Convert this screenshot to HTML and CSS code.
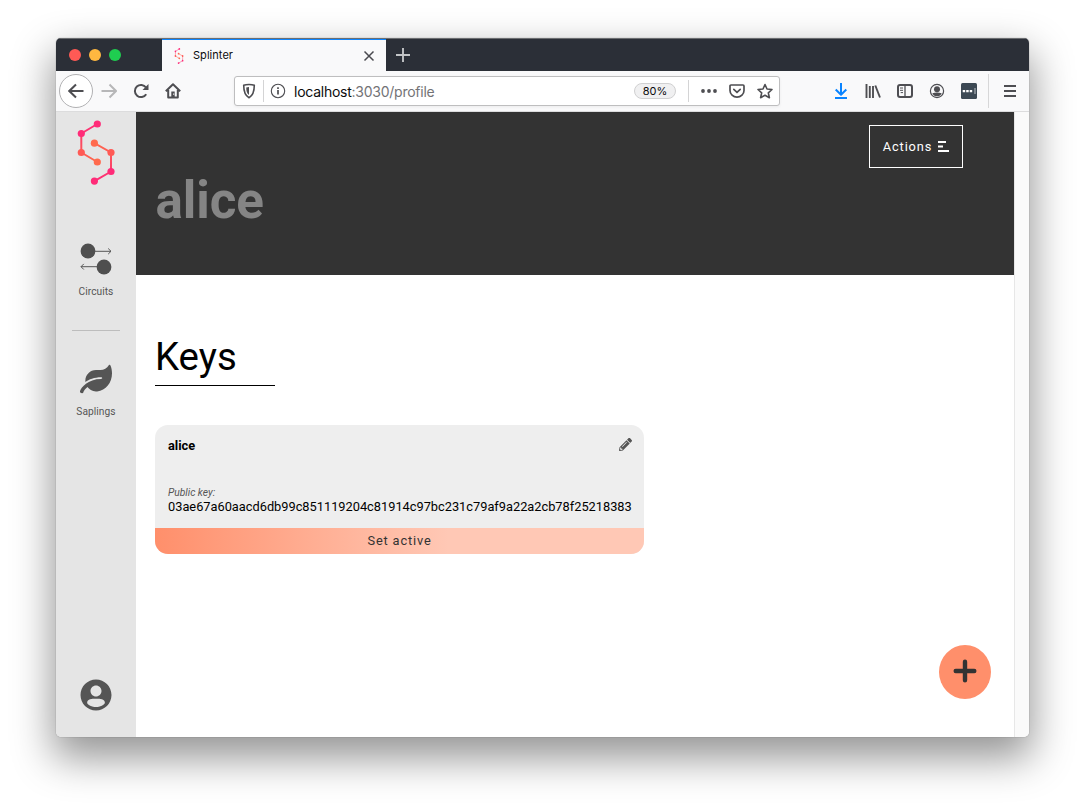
FILE: index.html
```html
<!DOCTYPE html>
<html lang="en">
<head>
<meta charset="utf-8">
<title>Splinter</title>
<link rel="stylesheet" href="styles.css">
</head>
<body>
<svg class="defs" width="0" height="0" aria-hidden="true">
  <defs>
    <linearGradient id="upper" gradientUnits="userSpaceOnUse" x1="0" y1="4" x2="0" y2="42"><stop offset="0" stop-color="#ff2b78"/><stop offset=".3" stop-color="#fb3d6c"/><stop offset="1" stop-color="#ff6a4d"/></linearGradient>
    <linearGradient id="lower" gradientUnits="userSpaceOnUse" x1="0" y1="23" x2="0" y2="61"><stop offset="0" stop-color="#ff6a4d"/><stop offset=".7" stop-color="#fb3d6c"/><stop offset="1" stop-color="#ff2b78"/></linearGradient>
    <symbol id="logo" viewBox="0 0 38 65">
      <g stroke-width="2" fill="none"><path stroke="url(#upper)" d="M20.3 4 4.3 13.5v19l16 9.5"/><path stroke="url(#lower)" d="M17.4 23.2 34 32.5v19l-16.6 9.6"/></g>
      <g fill="#ff2b78"><circle cx="20.3" cy="4" r="3.6"/><circle cx="4.3" cy="13.5" r="3.6"/><circle cx="34" cy="51.5" r="3.6"/><circle cx="17.4" cy="61.1" r="3.6"/></g>
      <g fill="#ff5a55"><circle cx="4.3" cy="32.5" r="3.6"/><circle cx="34" cy="32.5" r="3.6"/></g>
      <g fill="#ff6a4d"><circle cx="20.3" cy="42" r="3.6"/><circle cx="17.4" cy="23.2" r="3.6"/></g>
    </symbol>
  </defs>
</svg>
<div class="window">
  <div class="tabbar">
    <div class="lights"><i class="red"></i><i class="yellow"></i><i class="green"></i></div>
    <div class="tab">
      <svg class="favicon" viewBox="0 0 38 65"><use href="#logo"/></svg>
      <span class="tab-title">Splinter</span>
      <svg class="close" viewBox="0 0 12 12"><path d="M1.5 1.5l9 9M10.5 1.5l-9 9" stroke="#4a4a4f" stroke-width="1.5" fill="none"/></svg>
    </div>
    <svg class="newtab" viewBox="0 0 14 14"><path d="M7 0v14M0 7h14" stroke="#c3c5c7" stroke-width="1.9"/></svg>
  </div>
  <div class="toolbar">
    <div class="back"><svg class="ico" viewBox="0 0 16 16"><path d="M15.5 8H1.5M8 1.5 1.3 8 8 14.500"/></svg></div>
    <svg class="ico forward" viewBox="0 0 16 16"><path d="M.5 8h14M8.500 1.500 15 8l-6.500 6.500"/></svg>
    <svg class="ico reload" viewBox="0 0 16 16"><path d="M13.200 11.200A6.100 6.100 0 1 1 13 4.500"/><path class="solid" d="M15.500 1v6h-6z"/></svg>
    <svg class="ico home" viewBox="0 0 16 16"><path d="M.8 8.300 8 1.300l7.200 7M3.200 7v7.600h9.600V7" stroke-linejoin="round"/><path class="solid" d="M6.300 8.500h3.400V14H6.300z"/><path d="M8.700 10.500v1.300" stroke="#fff" stroke-width="1"/></svg>
    <div class="urlbar">
      <svg class="ico shield" viewBox="0 0 16 16"><path d="M8 1.500c2 0 4 .3 5.300.8 0 6-.8 10-5.300 12.400C3.500 12.300 2.700 8.300 2.700 2.300 4 1.800 6 1.500 8 1.500z" stroke-width="1.600"/><path class="solid" d="M8 4v8C5.800 10.300 5.300 8 5.200 4.400z"/></svg>
      <i class="bar"></i>
      <svg class="ico info" viewBox="0 0 16 16"><circle cx="8" cy="8" r="6.700" stroke-width="1.100"/><path d="M8 7v4.500M8 4.200v1.700" stroke-width="1.700"/></svg>
      <span class="url"><b>localhost</b>:3030/profile</span>
      <span class="zoom">80%</span>
      <i class="bar bar-right"></i>
      <svg class="ico dots" viewBox="0 0 16 16"><g class="solid"><circle cx="2" cy="8" r="1.900"/><circle cx="8" cy="8" r="1.900"/><circle cx="14" cy="8" r="1.900"/></g></svg>
      <svg class="ico pocket" viewBox="0 0 16 16"><path d="M2 2h12q1 0 1 1v4.500a7 6.700 0 0 1-14 0V3q0-1 1-1z" stroke-width="1.700"/><path d="M4.800 6.300 8 9.300l3.200-3" stroke-width="1.700" stroke-linecap="round"/></svg>
      <svg class="ico star" viewBox="0 0 16 16"><path d="m8 1.500 2 4.500 5 .5-3.700 3.300 1.100 4.900L8 12.200l-4.400 2.500 1.100-4.900L1 6.500 6 6z" stroke-width="1.600" stroke-linejoin="round"/></svg>
    </div>
    <div class="tools">
      <svg class="ico download" viewBox="0 0 16 16"><path d="M8 0v11.500M2.700 6.500 8 11.800l5.300-5.300M2 15h12" stroke-linejoin="round"/></svg>
      <svg class="ico" viewBox="0 0 16 16"><path d="M1.500 1v14M4.800 3v12M8 3v12" stroke-width="1.900"/><path d="m10.300 2.500 4.700 12" stroke-width="1.900"/></svg>
      <svg class="ico" viewBox="0 0 16 16"><rect x="1" y="2" width="14" height="12" rx="2"/><path d="M8 2v12" stroke-width="1.300"/><path d="M3 5h3M3 7.300h3M3.700 9.600H6" stroke-width="1"/></svg>
      <svg class="ico" viewBox="0 0 16 16"><circle cx="8" cy="8" r="6.600" stroke-width="1.200"/><g class="solid"><circle cx="8" cy="6.200" r="3"/><path d="M3.300 10.200q4.700-1.500 9.400 0Q11.500 13.300 8 13.300t-4.700-3.100z"/></g></svg>
      <svg class="ico" viewBox="0 0 16 16"><rect width="16" height="16" rx="1.500" fill="#3d4954" stroke="none"/><g fill="#fff" stroke="none"><path d="M1.700 7h2.500v2.300H1.700zM5.200 7h2.500v2.300H5.200zM8.700 7h2.500v2.300H8.700z"/></g><path d="M14 5v6" stroke="#aab0b6" stroke-width="1.200"/></svg>
    </div>
    <i class="divider"></i>
    <svg class="ico menu" viewBox="0 0 16 16"><path d="M2 3h12M2 8h12M2 13h12" stroke-width="1.800"/></svg>
  </div>
  <div class="viewport">
    <nav class="sidebar">
      <svg class="logo" viewBox="0 0 38 65"><use href="#logo"/></svg>
      <a class="nav-item circuits">
        <svg viewBox="0 0 32 32"><g fill="#4f4f4f"><circle cx="8" cy="8" r="7.400"/><circle cx="24" cy="24" r="7.400"/></g><path d="M15 8.300h16M28.200 5.500 31 8.300l-2.800 2.800M17 23.700H1M3.800 20.900 1 23.700l2.800 2.800" stroke="#555" fill="none"/></svg>
        <span>Circuits</span>
      </a>
      <hr class="rule">
      <a class="nav-item">
        <svg viewBox="0 0 576 512"><path fill="#555" d="M546.200 9.700c-5.600-12.500-21.600-13-28.300-1.200C486.900 62.400 431.400 96 368 96h-80C182 96 96 182 96 288c0 7 .8 13.700 1.500 20.500C161.300 262.800 253.400 224 384 224c8.800 0 16 7.200 16 16s-7.200 16-16 16C132.600 256 26 410.100 2.400 468c-6.600 16.300 1.200 34.900 17.500 41.600 16.400 6.800 35-1.100 41.800-17.300 1.500-3.600 20.900-47.900 71.900-90.600 32.400 43.900 94 85.800 174.900 77.200C465.500 467.500 576 326.700 576 154.300c0-50.200-10.800-102.200-29.800-144.600z"/></svg>
        <span>Saplings</span>
      </a>
      <svg class="user" viewBox="0 0 496 512"><path fill="#555" d="M248 8C111 8 0 119 0 256s111 248 248 248 248-111 248-248S385 8 248 8zm0 96c48.600 0 88 39.400 88 88s-39.400 88-88 88-88-39.400-88-88 39.400-88 88-88zm0 344c-58.700 0-142-30-142-72 0-38 38-55 70-58 25-2 42-3 72-3s47 1 72 3c32 3 70 20 70 58 0 42-83.300 72-142 72z"/></svg>
    </nav>
    <main class="main">
      <header class="hero">
        <h1>alice</h1>
        <button class="actions">Actions<svg viewBox="0 0 11 11"><path d="M0 1h8M0 5.500h5M0 10h11" stroke="#fff" stroke-width="2"/></svg></button>
      </header>
      <section class="content">
        <h2>Keys</h2>
        <article class="card">
          <div class="card-body">
            <div class="card-head"><strong>alice</strong><svg viewBox="0 0 512 512"><path fill="#555" d="M498 142l-46 46c-5 5-12 5-17 0L324 77c-5-5-5-12 0-17l46-46c19-19 49-19 68 0l60 60c19 19 19 49 0 68zM285 96L22 360 0 483c-3 17 12 31 28 28l123-21 264-263c5-5 5-12 0-17L302 96c-5-5-12-5-17 0zM124 340c-5-6-5-14 0-20l154-154c6-5 14-5 20 0s5 14 0 20L144 340c-6 5-14 5-20 0zm-36 84h48v36l-64 11-31-31 11-64h36v48z"/></svg></div>
            <em>Public key:</em>
            <p>03ae67a60aacd6db99c851119204c81914c97bc231c79af9a22a2cb78f25218383</p>
          </div>
          <button class="activate">Set active</button>
        </article>
        <button class="add" aria-label="Add key"><svg viewBox="0 0 24 24"><path d="M12 2.700v18.600M2.700 12h18.600" stroke="#333" stroke-width="4.400" stroke-linecap="round"/></svg></button>
      </section>
    </main>
    <div class="scrollbar"></div>
  </div>
</div>
</body>
</html>
```
FILE: styles.css
```css
* { box-sizing: border-box; }
body {
  margin: 0;
  padding: 38px 56px 0;
  height: 811px;
  overflow: hidden;
  background: #fff;
  font-family: Roboto, "Liberation Sans", sans-serif;
}
.defs { position: absolute; }
svg { display: block; flex: none; }
button { font: inherit; border: 0; padding: 0; }
.window {
  width: 973px;
  height: 699px;
  border-radius: 5px;
  overflow: hidden;
  display: flex;
  flex-direction: column;
  background: #fff;
  box-shadow: 0 0 1px rgba(0, 0, 0, .55), 0 18px 40px 3px rgba(0, 0, 0, .42);
}

/* Browser chrome */
.tabbar { display: flex; align-items: center; height: 33px; background: #2b2f37; border-top: 1px solid #6b6d70; }
.lights { width: 106px; padding-left: 13px; display: flex; gap: 8px; }
.lights i { width: 12px; height: 12px; border-radius: 50%; }
.red { background: #ff5a55; }
.yellow { background: #ffb840; }
.green { background: #1fcd50; }
.tab { width: 224px; height: 32px; background: #f9f9fa; border-top: 1px solid #0a84ff; display: flex; align-items: center; padding: 0 11px 0 10px; }
.favicon { width: 14px; height: 16px; }
.tab-title { flex: 1; margin: -1px 0 0 7px; font: 11px Inter, sans-serif; letter-spacing: .05px; color: #0c0c0d; }
.close { width: 12px; height: 12px; }
.newtab { width: 14px; height: 14px; margin: -1px 0 0 10px; }
.toolbar { display: flex; align-items: center; height: 41px; background: #f9f9fa; border-bottom: 1px solid #dcdcdd; padding-left: 3px; }
.ico { width: 16px; height: 16px; fill: none; stroke: #4e4e52; stroke-width: 2; }
.ico .solid { fill: #4e4e52; stroke: none; }
.back { width: 34px; height: 34px; border: 1px solid #b1b1b3; border-radius: 50%; background: #fff; display: flex; align-items: center; justify-content: center; }
.forward { margin-left: 8px; stroke: #b7b7b8; }
.reload, .home { margin-left: 16px; }
.urlbar { width: 546px; height: 30px; margin-left: 53px; padding: 0 6px; border: 1px solid #bebebf; border-radius: 3px; background: #fff; display: flex; align-items: center; box-shadow: 0 1px 3px rgba(0, 0, 0, .06); }
.bar { width: 1px; height: 22px; background: #d4d4d5; margin: 0 6px; }
.url { flex: 1; margin-left: 8px; font: 14px Inter, sans-serif; letter-spacing: -.25px; color: #737376; }
.url b { font-weight: 400; color: #0c0c0d; }
.zoom { width: 42px; height: 16px; border: 1px solid #d0d0d1; border-radius: 8px; background: #f0f0f1; text-align: center; font: 11px/14px Inter, sans-serif; color: #0c0c0d; }
.bar-right { margin: 0 12px; }
.pocket, .star { margin-left: 12px; }
.tools { display: flex; gap: 16px; margin-left: 53px; }
.download { stroke: #0a84ff; }
.divider { width: 1px; height: 34px; background: #d7d7d8; margin: 0 13px 0 11px; }

/* Application */
.viewport { flex: 1; display: flex; }
.sidebar { width: 80px; background: #e5e5e5; display: flex; flex-direction: column; align-items: center; padding: 8px 0 26px; }
.logo { width: 38px; height: 65px; }
.nav-item { display: flex; flex-direction: column; align-items: center; gap: 10px; font-size: 10.2px; line-height: 14px; letter-spacing: .05px; color: #555; }
.nav-item svg { width: 32px; height: 32px; }
.circuits { margin-top: 58px; }
.rule { width: 48px; height: 1px; border: 0; background: #bdbdbd; margin: 31px 0 32px; }
.user { width: 32px; height: 32px; margin-top: auto; }
.main { flex: 1; display: flex; flex-direction: column; }
.hero { height: 163px; background: #333; display: flex; justify-content: space-between; align-items: flex-start; padding: 13px 51px 0 19.500px; }
.hero h1 { margin: 46px 0 0; font-size: 51.2px; line-height: 60px; letter-spacing: -.1px; color: #858585; }
.actions { width: 94px; height: 43px; border: 1px solid #fff; background: none; color: #fff; font-size: 12.8px; letter-spacing: .85px; display: flex; align-items: center; justify-content: center; gap: 6px; }
.actions svg { width: 11px; height: 11px; }
.content { flex: 1; display: flex; flex-direction: column; align-items: flex-start; padding: 57px 23px 38px 19px; }
.content h2 { width: 120px; height: 54px; margin: 0 0 39px; font-size: 38.4px; line-height: 49px; font-weight: 400; border-bottom: 1px solid #000; }
.card { width: 489px; height: 129px; border-radius: 13px; overflow: hidden; background: #eee; display: flex; flex-direction: column; }
.card-body { flex: 1; padding: 12px 12px 0 13px; font-size: 12.8px; }
.card-head { display: flex; justify-content: space-between; height: 50px; line-height: 18px; }
.card-head svg { width: 13px; height: 13px; margin-top: 1px; }
.card em { display: block; font-size: 10.24px; line-height: 11px; color: #555; }
.card p { margin: 0; line-height: 17px; white-space: nowrap; }
.activate { height: 26px; padding-bottom: 2px; background: linear-gradient(90deg, #ff8f6b, #ffc8b5 60%); font-size: 12.8px; letter-spacing: .85px; color: #333; }
.add { width: 52px; height: 54px; margin: auto 0 0 auto; border-radius: 50%; background: #ff8f6b; display: flex; justify-content: center; padding-top: 14px; }
.add svg { width: 24px; height: 24px; }
.scrollbar { width: 15px; background: #fafafa; border-left: 1px solid #e7e7e7; }
```
